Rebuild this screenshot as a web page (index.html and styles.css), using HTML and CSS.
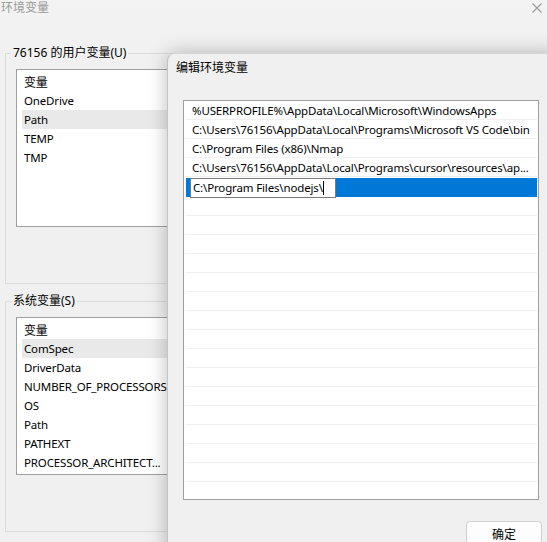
FILE: index.html
```html
<!doctype html>
<html lang="zh-CN">
	<head>
		<meta charset="UTF-8" />
		<title>环境变量</title>
		<link rel="stylesheet" href="styles.css">
	</head>
	<body>
		<div class="env-window">
			<div class="titlebar">
				<span class="title">环境变量</span>
				<svg class="close" width="10" height="10" viewBox="0 0 10 10">
					<path d="M0.5 0.5 L9.5 9.5 M9.5 0.5 L0.5 9.5" stroke="#9a9a9a" stroke-width="1.1" fill="none" />
				</svg>
			</div>

			<fieldset class="group user-vars">
				<legend>76156 的用户变量(U)</legend>
				<div class="listview">
					<div class="lv-head">变量</div>
					<div class="lv-row">OneDrive</div>
					<div class="lv-row selected">Path</div>
					<div class="lv-row">TEMP</div>
					<div class="lv-row">TMP</div>
				</div>
			</fieldset>

			<fieldset class="group sys-vars">
				<legend>系统变量(S)</legend>
				<div class="listview">
					<div class="lv-head">变量</div>
					<div class="lv-row selected">ComSpec</div>
					<div class="lv-row">DriverData</div>
					<div class="lv-row">NUMBER_OF_PROCESSORS</div>
					<div class="lv-row">OS</div>
					<div class="lv-row">Path</div>
					<div class="lv-row">PATHEXT</div>
					<div class="lv-row">PROCESSOR_ARCHITECT...</div>
				</div>
			</fieldset>
		</div>

		<div class="edit-dialog">
			<div class="dlg-title">编辑环境变量</div>
			<div class="dlg-body">
				<div class="path-list">
					<div class="path-row">%USERPROFILE%\AppData\Local\Microsoft\WindowsApps</div>
					<div class="path-row">C:\Users\76156\AppData\Local\Programs\Microsoft VS Code\bin</div>
					<div class="path-row">C:\Program Files (x86)\Nmap</div>
					<div class="path-row">C:\Users\76156\AppData\Local\Programs\cursor\resources\ap...</div>
					<div class="path-row editing">
						<div class="path-edit">C:\Program Files\nodejs\<span class="caret"></span></div>
					</div>
					<div class="path-row"></div>
					<div class="path-row"></div>
					<div class="path-row"></div>
					<div class="path-row"></div>
					<div class="path-row"></div>
					<div class="path-row"></div>
					<div class="path-row"></div>
					<div class="path-row"></div>
					<div class="path-row"></div>
					<div class="path-row"></div>
					<div class="path-row"></div>
					<div class="path-row"></div>
					<div class="path-row"></div>
					<div class="path-row"></div>
					<div class="path-row"></div>
					<div class="path-row"></div>
				</div>
				<div class="dlg-buttons">
					<button class="btn">确定</button>
				</div>
			</div>
		</div>
	</body>
</html>
```

FILE: styles.css
```css
body {
	margin: 0;
	width: 547px;
	height: 542px;
	overflow: hidden;
	position: relative;
	background-color: #f0f0f0;
	font-family: "Noto Sans", "Noto Sans CJK SC", sans-serif;
	font-size: 11.5px;
	letter-spacing: -0.15px;
	color: #000;
}

/* background window */
.env-window {
	height: 542px;
	padding-left: 5px;
	background: linear-gradient(#f3f3f3, #f0f0f0 80px);
}
.titlebar {
	display: flex;
	justify-content: space-between;
	align-items: flex-start;
	height: 45px;
	margin-left: -5px;
	padding: 0 5px 0 1px;
}
.titlebar .title {
	color: #9a9a9a;
	font-size: 12px;
	line-height: 16px;
	letter-spacing: 0;
}
.titlebar .close {
	margin-top: 3px;
}
.group {
	width: 520px;
	margin: 0;
	padding: 8px 10px 0;
	border: 1px solid #dcdcdc;
	box-sizing: border-box;
}
.group legend {
	margin-left: -5px;
	padding: 0 2px;
	line-height: 16px;
	font-size: 12px;
	letter-spacing: 0;
}
.user-vars {
	height: 239px;
}
.sys-vars {
	margin-top: 9px;
	height: 239px;
}
.listview {
	height: 158px;
	box-sizing: border-box;
	border: 1px solid #a0a0a0;
	background-color: #fff;
	padding: 2px 0 0 5px;
	overflow: hidden;
}
.lv-head,
.lv-row {
	height: 19px;
	line-height: 20px;
	padding-left: 2px;
	white-space: nowrap;
}
.lv-head {
	font-family: "Noto Sans CJK SC", sans-serif;
	font-size: 12px;
}
.lv-row.selected {
	background-color: #e9e9e9;
}

/* edit dialog over it */
.edit-dialog {
	position: absolute;
	left: 167px;
	top: 53px;
	width: 392px;
	height: 520px;
	background-color: #f0f0f0;
	border-top: 1px solid #d6d6d6;
	border-left: 1px solid #c4c4c4;
	border-top-left-radius: 8px;
	box-shadow: 0 0 20px rgba(0, 0, 0, 0.26);
}
.dlg-title {
	padding: 5px 0 0 8px;
	height: 41px;
	line-height: 16px;
	font-family: "Noto Sans CJK SC", sans-serif;
	font-size: 12px;
	letter-spacing: 0;
}
.dlg-body {
	padding-left: 15px;
}
.path-list {
	width: 356px;
	height: 400px;
	box-sizing: border-box;
	border: 1px solid #a0a0a0;
	background-color: #fff;
	padding: 0 1px 0 2px;
	overflow: hidden;
}
.path-row {
	height: 19px;
	line-height: 16px;
	box-sizing: border-box;
	border-bottom: 1px solid #f0f0f0;
	padding: 2px 0 0 6px;
	white-space: nowrap;
}
.path-row.editing {
	background-color: #0078d7;
	padding: 0 0 0 4px;
	border-bottom: none;
}
.path-edit {
	width: 146px;
	height: 20px;
	margin-top: 1px;
	box-sizing: border-box;
	border: 1px solid #7a7a7a;
	background-color: #fff;
	padding-left: 2px;
	line-height: 18px;
}
.caret {
	display: inline-block;
	width: 1px;
	height: 14px;
	background-color: #000;
	vertical-align: -3px;
}
.dlg-buttons {
	display: flex;
	justify-content: flex-end;
	padding: 21px 18px 0 0;
}
.btn {
	width: 76px;
	height: 24px;
	background-color: #fdfdfd;
	border: 1px solid #d0d0d0;
	border-radius: 4px;
	font-family: "Noto Sans CJK SC", sans-serif;
	font-size: 12px;
	color: #000;
	padding: 0;
}
```
